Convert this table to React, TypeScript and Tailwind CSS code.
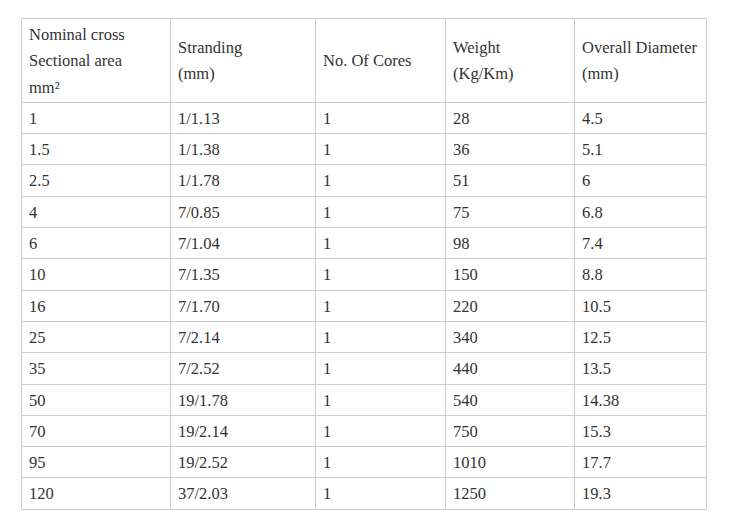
const rows = [
  ["1", "1/1.13", "1", "28", "4.5"],
  ["1.5", "1/1.38", "1", "36", "5.1"],
  ["2.5", "1/1.78", "1", "51", "6"],
  ["4", "7/0.85", "1", "75", "6.8"],
  ["6", "7/1.04", "1", "98", "7.4"],
  ["10", "7/1.35", "1", "150", "8.8"],
  ["16", "7/1.70", "1", "220", "10.5"],
  ["25", "7/2.14", "1", "340", "12.5"],
  ["35", "7/2.52", "1", "440", "13.5"],
  ["50", "19/1.78", "1", "540", "14.38"],
  ["70", "19/2.14", "1", "750", "15.3"],
  ["95", "19/2.52", "1", "1010", "17.7"],
  ["120", "37/2.03", "1", "1250", "19.3"],
];

const cell = "border border-[#cccccc] px-[7px] pt-[3px] pb-[1px] align-middle text-left font-normal";

export default function App() {
  return (
    <div className="bg-white min-h-[520px] pl-[21px] pt-[18px] font-['Liberation_Serif',serif] text-[16.5px] leading-[26.3px] text-[#333333]">
      <table className="border-collapse table-fixed w-[685px]">
        <colgroup>
          <col className="w-[149px]" />
          <col className="w-[145px]" />
          <col className="w-[130px]" />
          <col className="w-[129px]" />
          <col className="w-[132px]" />
        </colgroup>
        <thead>
          <tr>
            <th className={cell}>
              Nominal cross
              <br />
              Sectional area
              <br />
              mm²
            </th>
            <th className={cell}>
              Stranding
              <br />
              (mm)
            </th>
            <th className={cell}>No. Of Cores</th>
            <th className={cell}>
              Weight
              <br />
              (Kg/Km)
            </th>
            <th className={cell}>
              Overall Diameter
              <br />
              (mm)
            </th>
          </tr>
        </thead>
        <tbody>
          {rows.map((r) => (
            <tr key={r[0]}>
              {r.map((v, i) => (
                <td key={i} className={cell}>
                  {v}
                </td>
              ))}
            </tr>
          ))}
        </tbody>
      </table>
    </div>
  );
}
